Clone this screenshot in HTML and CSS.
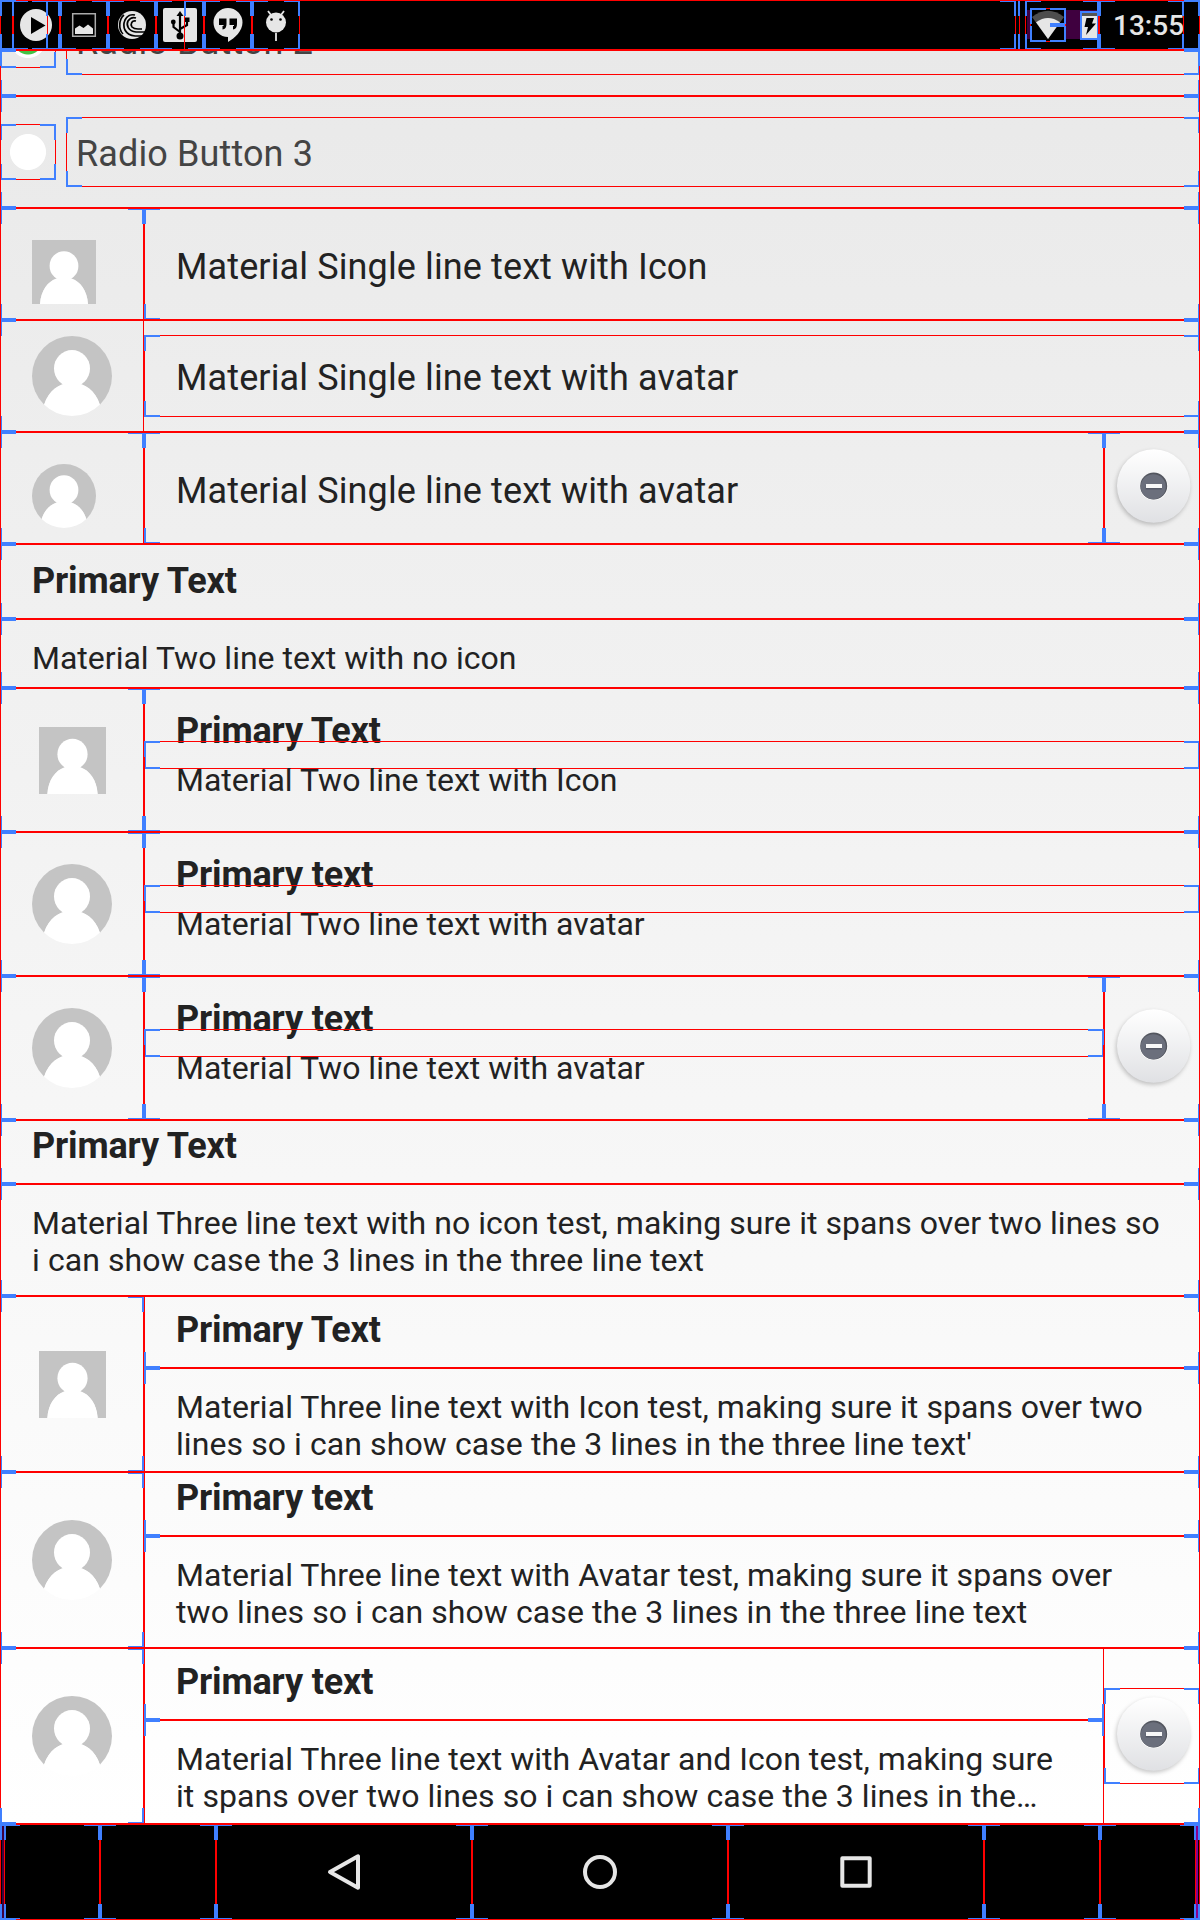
FILE: index.html
```html
<!DOCTYPE html>
<html lang="en">
<head>
<meta charset="utf-8">
<title>Material list items</title>
<link rel="stylesheet" href="styles.css">
</head>
<body>
<svg class="defs" aria-hidden="true">
  <symbol id="person" viewBox="0 0 80 80">
    <path d="M0 0H80V80H70C69 63 60 52 50 48.500Q40 45 30 48.500C20 52 11 63 10 80H0z" fill="#c4c4c4"/>
    <ellipse cx="40" cy="32.4" rx="18" ry="18.4" fill="#fff"/>
    <path d="M10 80C11 63 20 52 30 48.5Q40 45 50 48.5C60 52 69 63 70 80z" fill="#fff"/>
  </symbol>
  <linearGradient id="fabFill" x1="0" y1="0" x2="0" y2="1"><stop offset="0" stop-color="#fff"/><stop offset="1" stop-color="#e0e1e4"/></linearGradient>
  <symbol id="minus" viewBox="0 0 96 96">
    <circle cx="49.7" cy="46" r="36.7" fill="url(#fabFill)"/>
    <circle cx="49.8" cy="46.3" r="14" fill="#fff"/>
    <circle cx="49.7" cy="46" r="13.5" fill="#53565f"/>
    <circle cx="49.3" cy="46.7" r="12.5" fill="#6b6f7c"/>
    <rect x="41.7" y="45" width="16" height="4.5" fill="#555966"/>
    <rect x="42" y="44" width="16" height="4" fill="#f7f7f7"/>
  </symbol>
</svg>
<div class="screen">
  <header class="status bounds">
    <div class="notifications">
      <span class="slot bounds"><svg viewBox="0 0 48 50"><circle cx="24" cy="25" r="16" fill="#e6e6e6"/><path d="M19 17v17l14.500-8.500z" fill="#000"/></svg></span>
      <span class="slot bounds"><svg viewBox="0 0 48 50"><path d="M12.700 13.700h22.600v22.600h-22.600z" fill="none" stroke="#aaa" stroke-width="1.500"/><path d="M15 34v-5.500l4.500-3 4 2.500 4.500-3.500 5 4v5.500z" fill="#e6e6e6"/></svg></span>
      <span class="slot bounds"><svg viewBox="0 0 48 50"><circle cx="24" cy="25" r="14" fill="#e6e6e6"/><path d="M39 36H27C17 35 14 27 17 20C19 16 23 14 27 15M39 32H28C20 31 18 25 20 21C22 18 25 17 28 18M39 28" fill="none" stroke="#000" stroke-width="1.700"/><path d="M15 34C10 29 11 19 16 15M28 21C24 20 22 24 24 27Q26 29 30 29H34" fill="none" stroke="#000" stroke-width="1.700"/></svg></span>
      <span class="slot bounds"><svg viewBox="0 0 48 50"><rect x="7" y="8" width="34" height="34" rx="2" fill="#e6e6e6"/><path d="M24 35V15M24 32L17.500 27V22M24 29L31 25V20" fill="none" stroke="#000" stroke-width="2.200"/><path d="M24 11l3.500 5h-7z"/><circle cx="24" cy="36" r="3.500"/><circle cx="17.300" cy="22" r="2.400"/><rect x="29" y="17.500" width="4.500" height="4.500"/></svg></span>
      <span class="slot bounds"><svg viewBox="0 0 48 50"><path d="M24 8a14.500 14.500 0 0 1 14.500 14.500C38.500 31 31 38 24 42V37A14.500 14.500 0 0 1 24 8z" fill="#e6e6e6"/><path d="M15 18.500h7.500V24q0 5-4 5.500v-3.500h1V25H15zM25.500 18.500H33V24q0 5-4 5.500v-3.500h1V25h-4.500z"/></svg></span>
      <span class="slot bounds"><svg viewBox="0 0 48 50"><path d="M16 11l3 4M32 11l-3 4M24 33v8" stroke="#e6e6e6" stroke-width="1.800"/><ellipse cx="24" cy="22.500" rx="10" ry="10" fill="#e6e6e6"/><circle cx="19.500" cy="19.500" r="1.300"/><circle cx="28.500" cy="19.500" r="1.300"/></svg></span>
    </div>
    <div class="indicators bounds">
      <span class="wifi bounds"><svg viewBox="0 0 36 34"><path d="M2 9Q18-3.500 34 9L18 31z" fill="#4d4d4d"/><path d="M6 14.300Q18 5.500 30 14.300L18 31z" fill="#e6e6e6"/></svg><i class="tick"></i></span>
      <span class="battery bounds"><svg viewBox="0 0 19 29"><path d="M2 2h17v4H2z" fill="#555"/><path d="M2 5h17v23H2z" fill="#e6e6e6"/><path d="M6.500 7H14L12 12.500h4L6 24l2-8H4.500z"/></svg></span>
    </div>
    <div class="clock bounds">13:55</div>
    <i class="frame frame-lead bounds"></i>
    <i class="frame frame-first bounds"></i>
    <i class="frame frame-ticker bounds"></i>
    <i class="frame frame-ticker-end bounds"></i>
  </header>

  <main class="content bounds">
    <div class="row row-radio bounds">
      <span class="radio checked bounds"></span>
      <span class="radio-label bounds">Radio Button 2</span>
    </div>
    <div class="row row-radio bounds">
      <span class="radio bounds"></span>
      <span class="radio-label bounds">Radio Button 3</span>
    </div>

    <div class="row row-single bounds">
      <div class="lead lead-tall bounds"><svg class="icon-64"><use href="#person"/></svg></div>
      <div class="single bounds">Material Single line text with Icon</div>
    </div>
    <div class="row row-single bounds">
      <div class="lead lead-over bounds"><svg class="icon-80 round"><use href="#person"/></svg></div>
      <div class="single single-inset bounds">Material Single line text with avatar</div>
    </div>
    <div class="row row-single bounds">
      <div class="lead lead-tall bounds"><svg class="icon-64 round"><use href="#person"/></svg></div>
      <div class="single bounds">Material Single line text with avatar</div>
      <div class="action bounds"><svg class="fab"><use href="#minus"/></svg></div>
    </div>

    <div class="row bounds">
      <div class="lines">
        <div class="primary primary-75 bounds">Primary Text</div>
        <div class="secondary secondary-69 bounds">Material Two line text with no icon</div>
      </div>
    </div>
    <div class="row row-two bounds">
      <div class="lead bounds"><svg class="icon-67"><use href="#person"/></svg></div>
      <div class="lines">
        <div class="primary primary-81 bounds">Primary Text</div>
        <div class="secondary secondary-lap bounds">Material Two line text with Icon</div>
      </div>
    </div>
    <div class="row row-two bounds">
      <div class="lead bounds"><svg class="icon-80 round"><use href="#person"/></svg></div>
      <div class="lines">
        <div class="primary primary-81 bounds">Primary text</div>
        <div class="secondary secondary-lap bounds">Material Two line text with avatar</div>
      </div>
    </div>
    <div class="row row-two bounds">
      <div class="lead bounds"><svg class="icon-80 round"><use href="#person"/></svg></div>
      <div class="lines">
        <div class="primary primary-81 bounds">Primary text</div>
        <div class="secondary secondary-lap bounds">Material Two line text with avatar</div>
      </div>
      <div class="action bounds"><svg class="fab"><use href="#minus"/></svg></div>
    </div>

    <div class="row row-three bounds">
      <div class="lines">
        <div class="primary primary-64 bounds">Primary Text</div>
        <div class="secondary bounds">Material Three line text with no icon test, making sure it spans over two lines so<br>i can show case the 3 lines in the three line text</div>
      </div>
    </div>
    <div class="row row-three bounds">
      <div class="lead bounds"><svg class="icon-67"><use href="#person"/></svg></div>
      <div class="lines">
        <div class="primary primary-72 bounds">Primary Text</div>
        <div class="secondary bounds">Material Three line text with Icon test, making sure it spans over two<br>lines so i can show case the 3 lines in the three line text'</div>
      </div>
    </div>
    <div class="row row-three bounds">
      <div class="lead bounds"><svg class="icon-80 round"><use href="#person"/></svg></div>
      <div class="lines">
        <div class="primary primary-64 bounds">Primary text</div>
        <div class="secondary bounds">Material Three line text with Avatar test, making sure it spans over<br>two lines so i can show case the 3 lines in the three line text</div>
      </div>
    </div>
    <div class="row row-three bounds">
      <div class="lead bounds"><svg class="icon-80 round"><use href="#person"/></svg></div>
      <div class="lines">
        <div class="primary primary-72 bounds">Primary text</div>
        <div class="secondary bounds">Material Three line text with Avatar and Icon test, making sure<br>it spans over two lines so i can show case the 3 lines in the…</div>
      </div>
      <div class="action action-small bounds"><svg class="fab"><use href="#minus"/></svg></div>
    </div>
  </main>

  <nav class="nav bounds">
    <div class="nav-items bounds">
      <span class="nav-edge bounds"></span>
      <span class="nav-gap bounds"></span>
      <span class="nav-key bounds"><svg viewBox="0 0 40 40"><path d="M6 20L34 4.300v31.400z"/></svg></span>
      <span class="nav-key bounds"><svg viewBox="0 0 40 40"><circle cx="20" cy="20" r="15"/></svg></span>
      <span class="nav-key bounds"><svg viewBox="0 0 40 40"><rect x="6.300" y="6.300" width="27.400" height="27.400"/></svg></span>
      <span class="nav-gap bounds"></span>
      <span class="nav-edge bounds"></span>
    </div>
  </nav>
</div>
</body>
</html>
```

FILE: styles.css
```css
* { box-sizing: border-box; }
body { margin: 0; font-family: Roboto, "Liberation Sans", sans-serif; }
.defs { position: absolute; width: 0; height: 0; }
.screen { display: flex; flex-direction: column; width: 1200px; height: 1920px; overflow: hidden; background: #000; }
svg { display: block; flex: none; }

/* Layout bounds: red outline with blue corner marks, painted over the content */
.bounds { position: relative; }
.bounds::after {
  --r: linear-gradient(#f00, #f00);
  --b: linear-gradient(#4080ff, #4080ff);
  content: "";
  position: absolute;
  inset: 0;
  pointer-events: none;
  background:
    var(--b) left top / 16px 2px, var(--b) left top / 2px 16px,
    var(--b) right top / 16px 2px, var(--b) right top / 2px 16px,
    var(--b) left bottom / 16px 2px, var(--b) left bottom / 2px 16px,
    var(--b) right bottom / 16px 2px, var(--b) right bottom / 2px 16px,
    var(--r) left top / 100% 1px, var(--r) left bottom / 100% 1px,
    var(--r) left top / 1px 100%, var(--r) right top / 1px 100%;
  background-repeat: no-repeat;
}

/* Status bar */
.status { display: flex; flex: none; height: 50px; padding: 0 16px 0 12px; background: #000; }
.notifications { display: flex; flex: 1; }
.slot { width: 48px; height: 50px; }
.slot svg { width: 48px; height: 50px; }
.indicators { display: flex; align-items: center; width: 74px; padding-left: 5px; background: linear-gradient(#3f003f, #3f003f) 2px 10px / 70px 29px no-repeat; }
.wifi { width: 36px; height: 34px; background: #000; }
.wifi svg { width: 36px; height: 34px; }
.tick { position: absolute; left: 20px; top: 15px; width: 15px; height: 4px; background: #4080ff; }
.battery { width: 19px; height: 29px; margin-left: 14px; background: #000; }
.battery svg { width: 19px; height: 29px; }
.clock { width: 85px; padding: 10px 0 0 14px; font-size: 28px; line-height: 32px; font-weight: 500; color: #e6e6e6; white-space: nowrap; }
.frame { position: absolute; top: 0; height: 50px; }
.frame-lead { left: 0; width: 14px; }
.frame-first { left: 12px; width: 36px; }
.frame-ticker { left: 184px; width: 832px; }
.frame-ticker-end { left: 1004px; width: 16px; }
.frame-ticker::after { background-size: 16px 2px, 2px 16px, 16px 2px, 2px 16px, 0 0, 0 0, 16px 2px, 2px 16px, 100% 1px, 100% 1px, 1px 100%, 1px 100%; }
.frame-ticker-end::after { background-size: 0 0, 0 0, 0 0, 2px 16px, 0 0, 0 0, 0 0, 2px 16px, 0 0, 0 0, 0 0, 1px 100%; }

/* List */
.content { flex: none; height: 1774px; overflow: hidden; background: linear-gradient(#e9e9e9, #fff); color: #222; }
.row { display: flex; overflow: hidden; }
.row-radio { height: 112px; align-items: center; }
.row-radio:first-child { margin-top: -66px; }
.radio { width: 56px; height: 56px; background: radial-gradient(circle, #fff 17.600px, transparent 18.400px); }
.radio.checked { background: radial-gradient(circle, #43c143 14px, #fff 15px, #fff 17.600px, transparent 18.400px); }
.radio-label { flex: 1; height: 70px; margin-left: 10px; padding: 16px 10px 0; font-size: 36px; line-height: 42px; letter-spacing: .12px; color: #444; }

.row-single { height: 112px; }
.lead { display: flex; flex: none; justify-content: center; align-items: center; width: 144px; }
.lead-tall { height: 160px; justify-content: flex-start; align-items: flex-start; padding: 32px; }
.lead-over { height: 160px; margin-top: -24px; }
.single { flex: 1; padding: 38px 32px 0; font-size: 36px; line-height: 42px; letter-spacing: .12px; }
.single-inset { height: 82px; margin-top: 15px; padding-top: 22px; }
.row-two { height: 144px; }
.row-three { height: 176px; }
.lines { flex: 1; min-width: 0; display: flex; flex-direction: column; }
.primary { flex: none; padding: 0 32px; font-size: 36px; line-height: 42px; font-weight: 700; letter-spacing: -.15px; }
.primary-75 { height: 75px; padding-top: 16px; }
.primary-81 { height: 81px; padding-top: 22px; }
.primary-64 { height: 84px; margin-top: -20px; padding-top: 25px; }
.primary-72 { height: 92px; margin-top: -20px; padding-top: 33px; }
.secondary { flex: none; height: 140px; padding: 21px 0 0 32px; font-size: 32px; line-height: 37px; white-space: nowrap; }
.row-three .secondary { letter-spacing: .085px; }
.row-three .secondary::first-line { letter-spacing: .05px; }
.secondary-69 { height: 69px; }
.secondary-lap { height: 91px; margin-top: -28px; }

.icon-64 { width: 64px; height: 64px; }
.icon-67 { width: 67px; height: 67px; margin-left: 1px; }
.icon-80 { width: 80px; height: 80px; }
.round { border-radius: 50%; }
.action { display: flex; flex: none; align-items: center; width: 96px; }
.action-small { height: 96px; align-self: center; }
.fab { width: 96px; height: 96px; filter: drop-shadow(-1px 2px 2px rgba(0, 0, 0, .22)); }

/* Navigation bar */
.nav { flex: none; height: 96px; padding: 0 4px; background: linear-gradient(#3f003f, #3f003f) 2px 0 / 2px 96px no-repeat, linear-gradient(#8b008b, #8b008b) 1196px 0 / 2px 96px no-repeat, #000; }
.nav-items { display: flex; height: 96px; }
.nav-edge { width: 96px; }
.nav-gap { width: 116px; }
.nav-key { display: flex; justify-content: center; align-items: center; width: 256px; }
.nav-key svg { width: 40px; height: 40px; fill: none; stroke: #e6e6e6; stroke-width: 4; stroke-linejoin: round; }
```
